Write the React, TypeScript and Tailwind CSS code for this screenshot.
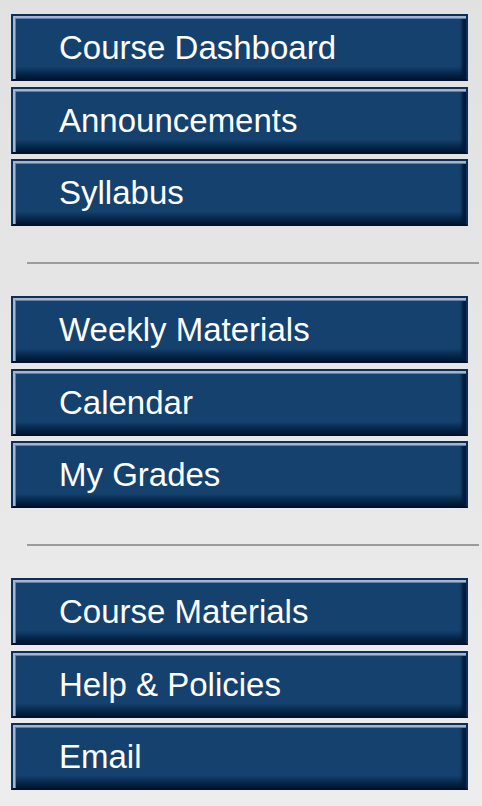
import React from "react";

const groups = [
  ["Course Dashboard", "Announcements", "Syllabus"],
  ["Weekly Materials", "Calendar", "My Grades"],
  ["Course Materials", "Help & Policies", "Email"],
];

const NavButton = ({ label }: { label: string }) => (
  <a
    href="#"
    className="flex h-[67px] w-[457px] items-center border-2 border-[#0b2e5c] border-b-[#00112a] bg-linear-to-b from-[#15416f] from-[80%] to-[#001631] pl-[46px] text-[33px] leading-none text-white shadow-[inset_2px_2px_0_#a3b6cd,inset_3px_3px_0_#5f80a8,inset_-4px_0_3px_#021a36]"
  >
    {label}
  </a>
);

export default function App() {
  return (
    <div
      className="min-h-[806px] w-[482px] bg-linear-to-b from-[#e1e1e1] to-[#ededed] pl-[11px] pt-[14px]"
      style={{ fontFamily: '"Liberation Sans", Arial, sans-serif' }}
    >
      {groups.map((group, i) => (
        <div key={i}>
          {i > 0 && (
            <div className="mb-[32px] ml-[16px] mt-[36px] h-[2px] w-[452px] bg-[#9b9b9b]" />
          )}
          <div className="flex flex-col gap-[5.5px]">
            {group.map((label) => (
              <NavButton key={label} label={label} />
            ))}
          </div>
        </div>
      ))}
    </div>
  );
}
